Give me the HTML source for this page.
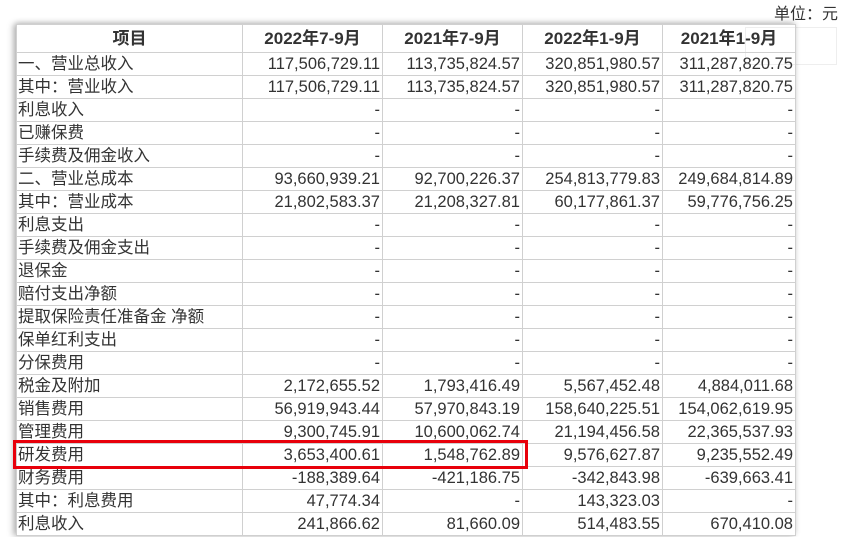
<!DOCTYPE html>
<html><head><meta charset="utf-8"><style>
html,body{margin:0;padding:0;background:#fff;width:844px;height:537px;overflow:hidden;}
body{font-family:"Liberation Sans","Microsoft YaHei","Noto Sans CJK SC",sans-serif;color:#333;position:relative;}
.unit{position:absolute;right:6px;top:0px;font-size:16px;}
.wrap{position:absolute;left:16px;top:24px;box-shadow:-3px 0 6px rgba(0,0,0,0.25),0 -2px 5px rgba(0,0,0,0.12);}
table{border-collapse:collapse;table-layout:fixed;font-size:16.5px;}
td,th{border:1px solid #d0d0d0;height:22px;padding:0 2px;line-height:22px;white-space:nowrap;overflow:hidden;}
th{height:27px;font-weight:bold;text-align:center;font-size:17px;}
td{text-align:right;}
td:first-child{text-align:left;padding-left:1px;}
.hl{position:absolute;left:13px;top:440px;width:509px;height:23px;border:3px solid #e8000b;}
.ghost{position:absolute;left:745px;top:27px;width:90px;height:36px;border:1px solid #eee;}
</style></head><body>
<div class="unit">单位：元</div>
<div class="ghost"></div>
<div class="wrap"><table>
<colgroup><col style="width:226px"><col style="width:140px"><col style="width:140px"><col style="width:140px"><col style="width:133px"></colgroup>
<tr><th>项目</th><th>2022年7-9月</th><th>2021年7-9月</th><th>2022年1-9月</th><th>2021年1-9月</th></tr>
<tr><td>一、营业总收入</td><td>117,506,729.11</td><td>113,735,824.57</td><td>320,851,980.57</td><td>311,287,820.75</td></tr>
<tr><td>其中：营业收入</td><td>117,506,729.11</td><td>113,735,824.57</td><td>320,851,980.57</td><td>311,287,820.75</td></tr>
<tr><td>利息收入</td><td>-</td><td>-</td><td>-</td><td>-</td></tr>
<tr><td>已赚保费</td><td>-</td><td>-</td><td>-</td><td>-</td></tr>
<tr><td>手续费及佣金收入</td><td>-</td><td>-</td><td>-</td><td>-</td></tr>
<tr><td>二、营业总成本</td><td>93,660,939.21</td><td>92,700,226.37</td><td>254,813,779.83</td><td>249,684,814.89</td></tr>
<tr><td>其中：营业成本</td><td>21,802,583.37</td><td>21,208,327.81</td><td>60,177,861.37</td><td>59,776,756.25</td></tr>
<tr><td>利息支出</td><td>-</td><td>-</td><td>-</td><td>-</td></tr>
<tr><td>手续费及佣金支出</td><td>-</td><td>-</td><td>-</td><td>-</td></tr>
<tr><td>退保金</td><td>-</td><td>-</td><td>-</td><td>-</td></tr>
<tr><td>赔付支出净额</td><td>-</td><td>-</td><td>-</td><td>-</td></tr>
<tr><td>提取保险责任准备金 净额</td><td>-</td><td>-</td><td>-</td><td>-</td></tr>
<tr><td>保单红利支出</td><td>-</td><td>-</td><td>-</td><td>-</td></tr>
<tr><td>分保费用</td><td>-</td><td>-</td><td>-</td><td>-</td></tr>
<tr><td>税金及附加</td><td>2,172,655.52</td><td>1,793,416.49</td><td>5,567,452.48</td><td>4,884,011.68</td></tr>
<tr><td>销售费用</td><td>56,919,943.44</td><td>57,970,843.19</td><td>158,640,225.51</td><td>154,062,619.95</td></tr>
<tr><td>管理费用</td><td>9,300,745.91</td><td>10,600,062.74</td><td>21,194,456.58</td><td>22,365,537.93</td></tr>
<tr><td>研发费用</td><td>3,653,400.61</td><td>1,548,762.89</td><td>9,576,627.87</td><td>9,235,552.49</td></tr>
<tr><td>财务费用</td><td>-188,389.64</td><td>-421,186.75</td><td>-342,843.98</td><td>-639,663.41</td></tr>
<tr><td>其中：利息费用</td><td>47,774.34</td><td>-</td><td>143,323.03</td><td>-</td></tr>
<tr><td>利息收入</td><td>241,866.62</td><td>81,660.09</td><td>514,483.55</td><td>670,410.08</td></tr>
</table></div>
<div class="hl"></div>
</body></html>
